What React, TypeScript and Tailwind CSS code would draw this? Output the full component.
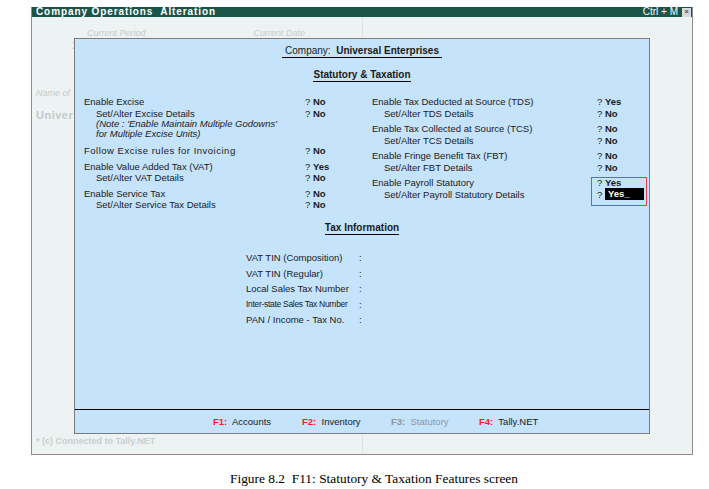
import React from "react";

type Row = { label: string; value: string; sub?: boolean; active?: boolean; wide?: boolean };

const leftGroups: { rows: Row[]; note?: string[] }[] = [
  {
    rows: [
      { label: "Enable Excise", value: "No" },
      { label: "Set/Alter Excise Details", value: "No", sub: true },
    ],
    note: ["(Note : 'Enable Maintain Multiple Godowns'", "for Multiple Excise Units)"],
  },
  { rows: [{ label: "Follow Excise rules for Invoicing", value: "No", wide: true }] },
  {
    rows: [
      { label: "Enable Value Added Tax (VAT)", value: "Yes" },
      { label: "Set/Alter VAT Details", value: "No", sub: true },
    ],
  },
  {
    rows: [
      { label: "Enable Service Tax", value: "No" },
      { label: "Set/Alter Service Tax Details", value: "No", sub: true },
    ],
  },
];

const rightGroups: Row[][] = [
  [
    { label: "Enable Tax Deducted at Source (TDS)", value: "Yes" },
    { label: "Set/Alter TDS Details", value: "No", sub: true },
  ],
  [
    { label: "Enable Tax Collected at Source (TCS)", value: "No" },
    { label: "Set/Alter TCS Details", value: "No", sub: true },
  ],
  [
    { label: "Enable Fringe Benefit Tax (FBT)", value: "No" },
    { label: "Set/Alter FBT Details", value: "No", sub: true },
  ],
];

const taxInfo = [
  { label: "VAT TIN (Composition)" },
  { label: "VAT TIN (Regular)" },
  { label: "Local Sales Tax Number" },
  { label: "Inter-state Sales Tax Number", narrow: true },
  { label: "PAN / Income - Tax No." },
];

const Value = ({ value, active }: { value: string; active?: boolean }) => (
  <div className="flex items-center">
    <span className="w-[8px]">?</span>
    {active ? (
      <span className="w-[39px] bg-black pl-[3px] font-bold leading-[12px] text-white">{value}_</span>
    ) : (
      <span className="font-bold">{value}</span>
    )}
  </div>
);

const OptionRow = ({ row, labelW }: { row: Row; labelW: string }) => (
  <div className="flex h-[11.5px] items-center whitespace-nowrap">
    <div className={`${labelW} ${row.sub ? "pl-[12px]" : ""} ${row.wide ? "tracking-[0.5px]" : ""}`}>{row.label}</div>
    <Value value={row.value} active={row.active} />
  </div>
);

export default function App() {
  return (
    <div
      className="h-[489px] w-[709px] overflow-hidden bg-white pl-[31px] pt-[7px]"
      style={{ fontFamily: '"Liberation Sans", Arial, sans-serif' }}
    >
      {/* Tally window */}
      <div className="relative flex h-[448px] w-[662px] flex-col border-x border-b border-[#8c8c8c] bg-[#ecf3f2]">
        <div className="flex h-[10px] items-center justify-between bg-[#1b5449] pl-[4px] pr-[1px] text-[10px] font-bold leading-[10px] text-white">
          <span className="whitespace-pre tracking-[0.9px]">Company Operations  Alteration</span>
          <div className="flex items-center gap-[4px]">
            <span className="font-normal">Ctrl + M</span>
            <span className="flex h-[9px] w-[9px] items-center justify-center bg-[#d8dcdc] text-[8px] leading-none text-[#555]">×</span>
          </div>
        </div>

        <div className="flex flex-1">
          <div className="flex w-[330px] flex-col justify-between pb-[8px] text-[#c4cbca]">
            <div>
              <div className="mt-[11px] flex text-[9px] italic leading-[10px]">
                <span className="ml-[55px]">Current Period</span>
                <span className="ml-[108px]">Current Date</span>
              </div>
              <div className="ml-[40px] mt-[3px] text-[10px] font-bold leading-[10px]">1</div>
              <div className="ml-[4px] mt-[37px] text-[9px] italic leading-[10px]">Name of</div>
              <div className="ml-[4px] mt-[11px] text-[11px] font-bold leading-[12px] tracking-[0.5px]">Univers</div>
            </div>
            <div className="ml-[4px] text-[9px] font-bold leading-[10px] text-[#c9cfce]">* (c) Connected to Tally.NET</div>
          </div>
          <div className="flex-1 border-l border-[#dde3e2]" />
        </div>

        {/* F11 Features panel */}
        <div className="absolute left-[42px] top-[31px] flex h-[396px] w-[576px] flex-col border border-[#7c7c7c] bg-[#c6e3fc] text-[9.5px] text-[#1a1a1a]">
          <div className="mt-[6px] flex justify-center text-[10px]">
            <div className="border-b border-black px-[3px] leading-[12px]">
              Company:&nbsp; <span className="font-bold">Universal Enterprises</span>
            </div>
          </div>
          <div className="mt-[11px] flex justify-center">
            <div className="border-b border-black text-[10px] font-bold leading-[12px]">Statutory &amp; Taxation</div>
          </div>

          <div className="mt-[14px] flex pl-[9px] leading-[11.5px]">
            <div className="flex w-[288px] flex-col">
              {leftGroups.map((g, i) => (
                <div key={i} className={i === 0 ? "" : i === 1 ? "mt-[7px]" : "mt-[4px]"}>
                  {g.rows.map((r) => (
                    <OptionRow key={r.label} row={r} labelW="w-[221px]" />
                  ))}
                  {g.note && (
                    <div className="pl-[12px] text-[9.5px] italic leading-[9.5px]">
                      {g.note.map((n) => (
                        <div key={n}>{n}</div>
                      ))}
                    </div>
                  )}
                </div>
              ))}
            </div>
            <div className="flex flex-col gap-[4px]">
              {rightGroups.map((g, i) => (
                <div key={i}>
                  {g.map((r) => (
                    <OptionRow key={r.label} row={r} labelW="w-[225px]" />
                  ))}
                </div>
              ))}
              <div className="relative">
                <OptionRow row={{ label: "Enable Payroll Statutory", value: "Yes" }} labelW="w-[225px]" />
                <OptionRow
                  row={{ label: "Set/Alter Payroll Statutory Details", value: "Yes", sub: true, active: true }}
                  labelW="w-[225px]"
                />
                <div className="absolute left-[219px] top-[-0.5px] h-[29px] w-[56px] border border-[#e8403f]" />
              </div>
            </div>
          </div>

          <div className="mt-[11px] flex justify-center">
            <div className="border-b border-black text-[10px] font-bold leading-[12px]">Tax Information</div>
          </div>

          <div className="mt-[16px] flex flex-col pl-[171px]">
            {taxInfo.map((t) => (
              <div key={t.label} className="flex h-[15.5px] items-center whitespace-nowrap">
                <span className={`w-[113px] ${t.narrow ? "text-[8.5px] tracking-[-0.3px]" : ""}`}>{t.label}</span>
                <span>:</span>
              </div>
            ))}
          </div>

          <div className="flex-1" />

          <div className="flex h-[24px] items-center border-t border-black pl-[138px] pt-[2px] text-[9.5px]">
            <span className="w-[89px]">
              <span className="font-bold text-[#ff1a1a]">F1:</span>&nbsp; Accounts
            </span>
            <span className="w-[89px]">
              <span className="font-bold text-[#ff1a1a]">F2:</span>&nbsp; Inventory
            </span>
            <span className="w-[88px] text-[#8e9698]">
              <span className="font-bold">F3:</span>&nbsp; Statutory
            </span>
            <span>
              <span className="font-bold text-[#ff1a1a]">F4:</span>&nbsp; Tally.NET
            </span>
          </div>
        </div>
      </div>

      <div
        className="mt-[17px] w-[686px] text-center text-[13.4px] leading-[14px] text-black"
        style={{ fontFamily: '"Liberation Serif", "Times New Roman", serif' }}
      >
        <span className="whitespace-pre">Figure 8.2  F11: Statutory &amp; Taxation Features screen</span>
      </div>
    </div>
  );
}
